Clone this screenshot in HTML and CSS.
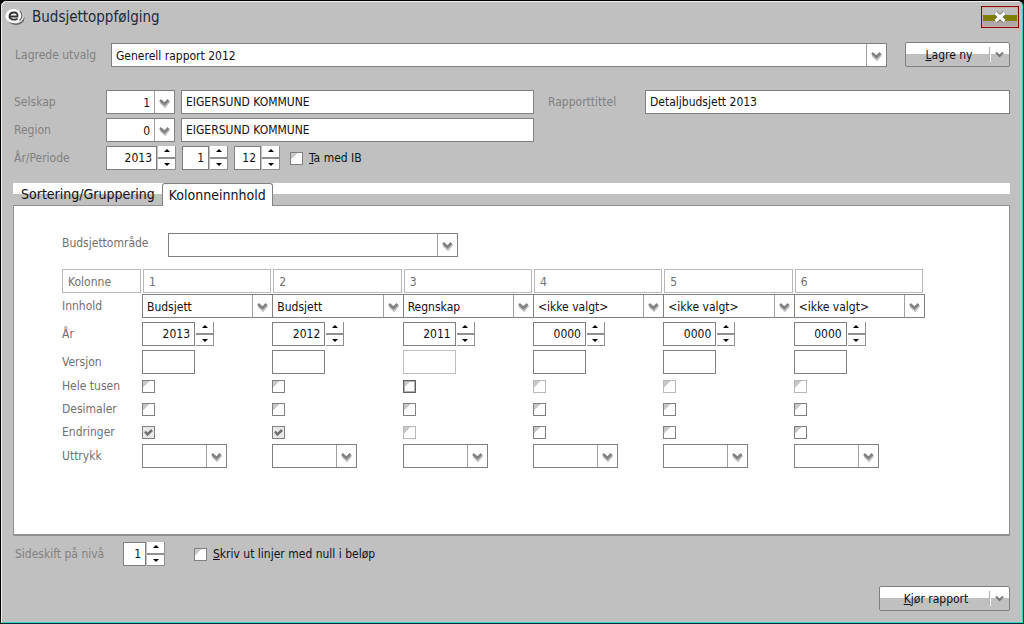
FILE: index.html
```html
<!DOCTYPE html>
<html lang="no">
<head>
<meta charset="utf-8">
<title>Budsjettoppfølging</title>
<link rel="stylesheet" href="styles.css">
</head>
<body>
<form class="window">
  <header class="titlebar">
    <svg class="app-icon" width="20" height="18" viewBox="0 0 20 18" aria-hidden="true">
      <ellipse cx="11" cy="10" rx="8.500" ry="7" fill="#666"/>
      <ellipse cx="10.500" cy="8.500" rx="8.500" ry="7" fill="#ddd"/>
      <ellipse cx="8.500" cy="8" rx="8" ry="7" fill="#fff"/>
      <path d="M5 8.500h7.500c.6-2.500-1-4-3.500-4-3 0-4.500 1.800-4.500 4 0 2.800 4 4 8 2.300" fill="none" stroke="#333" stroke-width="1.800"/>
      <path d="M15 3c2.500 3 2.500 6.500-.5 9.500" fill="none" stroke="#666" stroke-width="1.200"/>
    </svg>
    <h1 class="title">Budsjettoppfølging</h1>
    <button type="button" class="close" aria-label="Lukk">
      <svg width="16" height="12" viewBox="0 0 16 12" aria-hidden="true">
        <path d="M3.500 2l9 8M12.500 2l-9 8" stroke="#666" stroke-width="5"/>
        <path d="M3.500 2l9 8M12.500 2l-9 8" stroke="#fff" stroke-width="3.200"/>
      </svg>
    </button>
  </header>

  <div class="saved">
    <label for="utvalg">Lagrede utvalg</label>
    <select id="utvalg" class="field combo"><option>Generell rapport 2012</option></select>
    <div class="split split-small">
      <button type="button" class="split-main"><u>L</u>agre ny</button>
      <button type="button" class="split-more" aria-label="Flere valg"><svg width="9" height="8" viewBox="0 0 9 8"><path d="M1 1.500l3.500 3.500L8 1.500" fill="none" stroke="#777" stroke-width="2"/></svg></button>
    </div>
  </div>

  <div class="filters">
    <div class="filters-left">
      <label for="selskap">Selskap</label>
      <div class="line">
        <select id="selskap" class="field combo code"><option>1</option></select>
        <input class="field name" aria-label="Selskapsnavn" value="EIGERSUND KOMMUNE">
      </div>
      <label for="region">Region</label>
      <div class="line">
        <select id="region" class="field combo code"><option>0</option></select>
        <input class="field name" aria-label="Regionnavn" value="EIGERSUND KOMMUNE">
      </div>
      <label for="aar">År/Periode</label>
      <div class="line">
        <div class="spin"><input id="aar" class="field num year" value="2013"><span class="arrows"><button type="button" class="up" aria-label="Opp"></button><button type="button" class="down" aria-label="Ned"></button></span></div>
        <div class="spin"><input class="field num short" aria-label="Fra periode" value="1"><span class="arrows"><button type="button" class="up" aria-label="Opp"></button><button type="button" class="down" aria-label="Ned"></button></span></div>
        <div class="spin"><input class="field num short" aria-label="Til periode" value="12"><span class="arrows"><button type="button" class="up" aria-label="Opp"></button><button type="button" class="down" aria-label="Ned"></button></span></div>
        <label class="check-label ib"><input type="checkbox" class="check"><span><u>T</u>a med IB</span></label>
      </div>
    </div>
    <div class="filters-right">
      <label for="tittel">Rapporttittel</label>
      <input id="tittel" class="field" value="Detaljbudsjett 2013">
    </div>
  </div>

  <div class="tabs" role="tablist">
    <button type="button" class="tab" role="tab">Sortering/Gruppering</button>
    <button type="button" class="tab active" role="tab" aria-selected="true">Kolonneinnhold</button>
  </div>

  <section class="panel">
    <div class="area">
      <label for="omrade">Budsjettområde</label>
      <select id="omrade" class="field combo"><option></option></select>
    </div>
    <table class="columns">
      <thead>
        <tr class="r-head"><th scope="col"><span class="head">Kolonne</span></th><th scope="col"><span class="head">1</span></th><th scope="col"><span class="head">2</span></th><th scope="col"><span class="head">3</span></th><th scope="col"><span class="head">4</span></th><th scope="col"><span class="head">5</span></th><th scope="col"><span class="head">6</span></th></tr>
      </thead>
      <tbody>
        <tr class="r-field"><th scope="row">Innhold</th>
          <td><select class="field combo wide" aria-label="Innhold 1"><option>Budsjett</option></select></td>
          <td><select class="field combo wide" aria-label="Innhold 2"><option>Budsjett</option></select></td>
          <td><select class="field combo wide" aria-label="Innhold 3"><option>Regnskap</option></select></td>
          <td><select class="field combo wide" aria-label="Innhold 4"><option>&lt;ikke valgt&gt;</option></select></td>
          <td><select class="field combo wide" aria-label="Innhold 5"><option>&lt;ikke valgt&gt;</option></select></td>
          <td><select class="field combo wide" aria-label="Innhold 6"><option>&lt;ikke valgt&gt;</option></select></td></tr>
        <tr class="r-field"><th scope="row">År</th>
          <td><div class="spin"><input class="field num" aria-label="År 1" value="2013"><span class="arrows"><button type="button" class="up" aria-label="Opp"></button><button type="button" class="down" aria-label="Ned"></button></span></div></td>
          <td><div class="spin"><input class="field num" aria-label="År 2" value="2012"><span class="arrows"><button type="button" class="up" aria-label="Opp"></button><button type="button" class="down" aria-label="Ned"></button></span></div></td>
          <td><div class="spin"><input class="field num" aria-label="År 3" value="2011"><span class="arrows"><button type="button" class="up" aria-label="Opp"></button><button type="button" class="down" aria-label="Ned"></button></span></div></td>
          <td><div class="spin"><input class="field num" aria-label="År 4" value="0000"><span class="arrows"><button type="button" class="up" aria-label="Opp"></button><button type="button" class="down" aria-label="Ned"></button></span></div></td>
          <td><div class="spin"><input class="field num" aria-label="År 5" value="0000"><span class="arrows"><button type="button" class="up" aria-label="Opp"></button><button type="button" class="down" aria-label="Ned"></button></span></div></td>
          <td><div class="spin"><input class="field num" aria-label="År 6" value="0000"><span class="arrows"><button type="button" class="up" aria-label="Opp"></button><button type="button" class="down" aria-label="Ned"></button></span></div></td></tr>
        <tr class="r-version"><th scope="row">Versjon</th>
          <td><input class="field version" aria-label="Versjon 1"></td>
          <td><input class="field version" aria-label="Versjon 2"></td>
          <td><input class="field version" aria-label="Versjon 3" disabled></td>
          <td><input class="field version" aria-label="Versjon 4"></td>
          <td><input class="field version" aria-label="Versjon 5"></td>
          <td><input class="field version" aria-label="Versjon 6"></td></tr>
        <tr class="r-check"><th scope="row">Hele tusen</th>
          <td><input type="checkbox" class="check" aria-label="Hele tusen 1"></td>
          <td><input type="checkbox" class="check" aria-label="Hele tusen 2"></td>
          <td><input type="checkbox" class="check focused" aria-label="Hele tusen 3"></td>
          <td><input type="checkbox" class="check" aria-label="Hele tusen 4" disabled></td>
          <td><input type="checkbox" class="check" aria-label="Hele tusen 5" disabled></td>
          <td><input type="checkbox" class="check" aria-label="Hele tusen 6" disabled></td></tr>
        <tr class="r-check"><th scope="row">Desimaler</th>
          <td><input type="checkbox" class="check" aria-label="Desimaler 1"></td>
          <td><input type="checkbox" class="check" aria-label="Desimaler 2"></td>
          <td><input type="checkbox" class="check" aria-label="Desimaler 3"></td>
          <td><input type="checkbox" class="check" aria-label="Desimaler 4"></td>
          <td><input type="checkbox" class="check" aria-label="Desimaler 5"></td>
          <td><input type="checkbox" class="check" aria-label="Desimaler 6"></td></tr>
        <tr class="r-check"><th scope="row">Endringer</th>
          <td><input type="checkbox" class="check" aria-label="Endringer 1" checked></td>
          <td><input type="checkbox" class="check" aria-label="Endringer 2" checked></td>
          <td><input type="checkbox" class="check" aria-label="Endringer 3" disabled></td>
          <td><input type="checkbox" class="check" aria-label="Endringer 4"></td>
          <td><input type="checkbox" class="check" aria-label="Endringer 5"></td>
          <td><input type="checkbox" class="check" aria-label="Endringer 6"></td></tr>
        <tr class="r-last"><th scope="row">Uttrykk</th>
          <td><select class="field combo expr" aria-label="Uttrykk 1"><option></option></select></td>
          <td><select class="field combo expr" aria-label="Uttrykk 2"><option></option></select></td>
          <td><select class="field combo expr" aria-label="Uttrykk 3"><option></option></select></td>
          <td><select class="field combo expr" aria-label="Uttrykk 4"><option></option></select></td>
          <td><select class="field combo expr" aria-label="Uttrykk 5"><option></option></select></td>
          <td><select class="field combo expr" aria-label="Uttrykk 6"><option></option></select></td></tr>
      </tbody>
    </table>
  </section>

  <div class="paging">
    <label for="niva">Sideskift på nivå</label>
    <div class="spin"><input id="niva" class="field num level" value="1"><span class="arrows"><button type="button" class="up" aria-label="Opp"></button><button type="button" class="down" aria-label="Ned"></button></span></div>
    <label class="check-label"><input type="checkbox" class="check"><span><u>S</u>kriv ut linjer med null i beløp</span></label>
  </div>

  <footer class="actions">
    <div class="split">
      <button type="button" class="split-main"><u>K</u>jør rapport</button>
      <button type="button" class="split-more" aria-label="Flere valg"><svg width="9" height="8" viewBox="0 0 9 8"><path d="M1 1.500l3.500 3.500L8 1.500" fill="none" stroke="#777" stroke-width="2"/></svg></button>
    </div>
  </footer>
</form>
</body>
</html>
```

FILE: styles.css
```css
* { box-sizing: border-box; }

body {
  margin: 0;
  background: #000;
  color: #101018;
  font: 12px/24px "DejaVu Sans Condensed", Tahoma, "Noto Sans", sans-serif;
}

button, input, select { font: inherit; color: inherit; margin: 0; padding: 0; border-radius: 0; }

.window {
  display: flex;
  flex-direction: column;
  min-height: 100vh;
  padding: 0 13px 12px 12px;
  background: #c0c0c0;
  border: 1px solid #000;
  border-right-color: #033;
  border-bottom-color: #033;
  border-radius: 6px 6px 0 0;
  box-shadow: inset 1px 1px #eee, inset -1px -1px #4cc;
}

label { color: #808080; }

.titlebar { display: flex; align-items: center; height: 32px; margin: 0 -9px 0 -8px; }
.title { flex: 1; margin: 0 0 0 7px; font-size: 15px; font-weight: normal; color: #1a2a3a; }
.close {
  display: flex;
  align-items: center;
  justify-content: center;
  width: 38px;
  height: 22px;
  border: 1px solid #800000;
  box-shadow: inset 0 0 0 1px #d8a8a8;
  background: linear-gradient(#c0c0c0 42%, #808000 42%, #808000 72%, #b0a8a8 72%);
}

/* Fields */
.field {
  height: 24px;
  padding: 0 4px;
  border: 1px solid #808080;
  background-color: #fff;
  min-width: 0;
}
.field:disabled { border-color: #c0c0c0; }
.combo {
  appearance: none;
  padding-right: 24px;
  background-image: url("data:image/svg+xml,%3Csvg xmlns='http://www.w3.org/2000/svg' width='20' height='22'%3E%3Cpath d='M.5 0v22' stroke='%23a0a0a0'/%3E%3Cpath d='M6.500 11l4.500 4 4-5' fill='none' stroke='%23c0c0c0' stroke-width='3'/%3E%3Cpath d='M6 9l4.500 4 4-4' fill='none' stroke='%23808080' stroke-width='2.500'/%3E%3C/svg%3E");
  background-repeat: no-repeat;
  background-position: right center;
}
.code { width: 69px; text-align: right; text-align-last: right; }
.name { flex: 1; }
.num { width: 53px; text-align: right; }
.year { width: 51px; }
.short { width: 27px; }
.level { width: 23px; }
.version { width: 53px; }
.expr { width: 85px; }

.spin { display: flex; gap: 1px; }
.arrows { display: flex; flex-direction: column; width: 18px; height: 24px; }
.arrows button {
  flex: 1;
  border: 0 solid #909090;
  border-width: 0 1px 1px 0;
  background: #fff no-repeat center;
}
.arrows .up { border-bottom-width: 2px; background-image: url("data:image/svg+xml,%3Csvg xmlns='http://www.w3.org/2000/svg' width='6' height='4'%3E%3Cpath d='M3 0l3 3H0z'/%3E%3C/svg%3E"); }
.arrows .down { background-image: url("data:image/svg+xml,%3Csvg xmlns='http://www.w3.org/2000/svg' width='6' height='4'%3E%3Cpath d='M3 4L0 1h6z'/%3E%3C/svg%3E"); }

.check {
  appearance: none;
  display: block;
  width: 13px;
  height: 13px;
  border: 1px solid #808080;
  background: linear-gradient(135deg, #c8c8c8 30%, #fff 32%);
}
.check:disabled { border-color: #b8b8b8; }
.check.focused { border-color: #606060; box-shadow: inset 0 0 0 1px #b0b0b0; }
.check:checked {
  background: #e8e8e8 url("data:image/svg+xml,%3Csvg xmlns='http://www.w3.org/2000/svg' width='11' height='11'%3E%3Cpath d='M2 4.500l2.500 3L9 3' fill='none' stroke='%23707070' stroke-width='2.500'/%3E%3C/svg%3E") center no-repeat;
}
.check-label { display: flex; align-items: center; gap: 6px; color: #101018; }

/* Split buttons */
.split {
  display: flex;
  width: 131px;
  height: 25px;
  border: 1px solid #808080;
  border-radius: 2px;
  padding: 1px;
  background: linear-gradient(#fff 48%, #c0c0c0 48%);
}
.split-small { width: 105px; }
.split button { border: 0; background: none; line-height: 22px; }
.split-main { flex: 1; }
.split-more { width: 17px; margin: 3px 0; display: flex; align-items: center; justify-content: center; box-shadow: -1px 0 #fff, -2px 0 #b0b0b0; }

/* Header form */
.saved { display: flex; align-items: center; margin: 9px 1px 0 2px; }
.saved label { width: 96px; }
.saved .combo { flex: 1; margin-right: 18px; }
.saved .split { margin-right: -1px; }

.filters { display: flex; gap: 14px; margin: 23px 0 0 1px; }
.filters-left { flex: 0 1 520px; display: grid; grid-template-columns: 92px 1fr; row-gap: 4px; min-width: 0; }
.line { display: flex; gap: 6px; }
.line .ib { margin-left: 4px; }
.filters-right { flex: 1; display: flex; align-items: flex-start; min-width: 0; }
.filters-right label { width: 97px; }
.filters-right .field { flex: 1; }

/* Tabs and panel */
.tabs {
  display: flex;
  height: 22px;
  margin-top: 13px;
  background: linear-gradient(#fff 50%, #c0c0c0 50%);
}
.tab {
  height: 22px;
  padding: 0 7px 0 8px;
  border: 0;
  background: none;
  font-size: 14px;
  line-height: 22px;
}
.tab.active {
  height: 23px;
  padding: 0 6px;
  position: relative;
  border: 1px solid #808080;
  border-bottom: 0;
  border-radius: 3px 3px 0 0;
  background: #fff;
}
.panel {
  flex: 1;
  padding: 27px 85px 16px 48px;
  background: #fff;
  border: 1px solid #909090;
  border-width: 1px 1px 2px 1px;
}
.panel label, .panel th { color: #707070; }
.area { display: flex; margin-bottom: 12px; }
.area label { width: 106px; line-height: 20px; }
.area .combo { width: 290px; }

.columns { width: 100%; table-layout: fixed; border-collapse: collapse; }
.columns th, .columns td { padding: 0; vertical-align: top; text-align: left; font-weight: normal; }
.columns th:first-child { width: 80px; }
.head { display: block; height: 24px; margin: 0 1px; padding: 0 5px; border: 1px solid #b8b8b8; }
th:first-child .head { margin-left: 0; }
.columns .wide { display: block; width: calc(100% + 1px); }
.columns .version, .columns .expr { display: block; }
.r-head { height: 25px; }
.r-field { height: 28px; }
.r-version { height: 25px; }
.r-check { height: 23px; }
.r-last { height: 24px; }
.columns .r-check th, .columns .r-check td { line-height: 23px; vertical-align: middle; }

.paging { display: flex; margin: 6px 2px 0; }
.paging > label:first-child { width: 108px; }
.paging .check-label { margin-left: 29px; }

.actions { display: flex; justify-content: flex-end; margin-top: 20px; }
```
